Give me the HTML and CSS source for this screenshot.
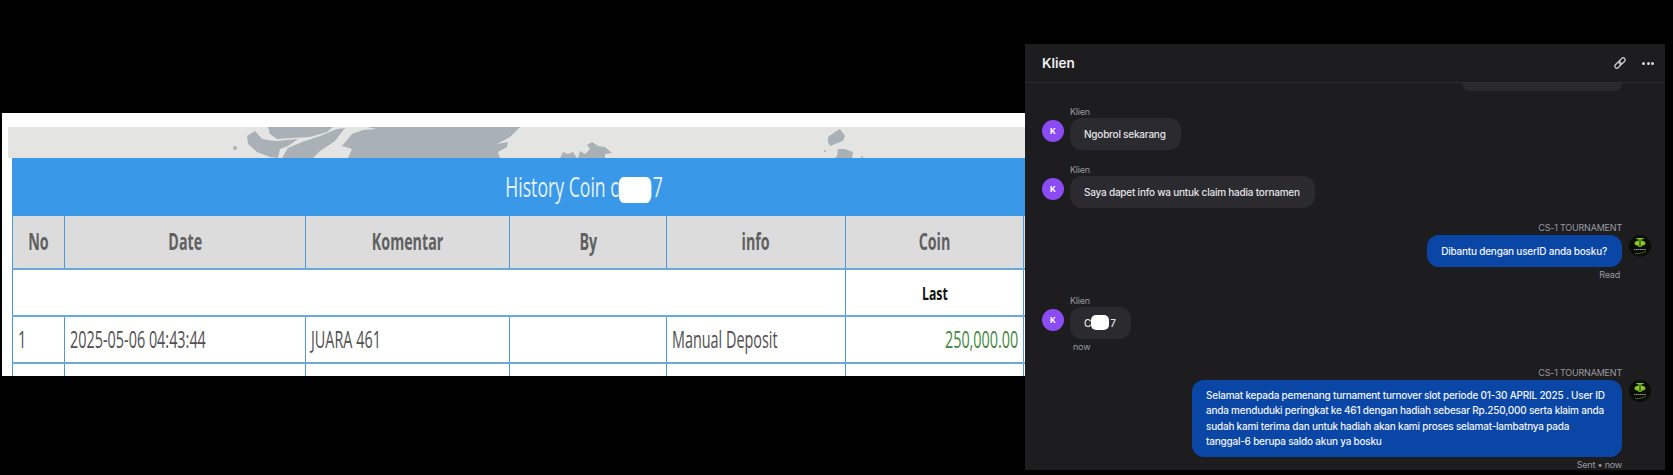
FILE: index.html
```html
<!DOCTYPE html>
<html lang="id">
<head>
<meta charset="utf-8">
<title>History Coin</title>
<link rel="stylesheet" href="styles.css">
</head>
<body>
<main class="stage">
  <section class="sheet">
    <div class="map">
      <svg class="map-art" viewBox="0 0 1017 31" preserveAspectRatio="none" aria-hidden="true">
        <circle cx="227" cy="21" r="2"/>
        <path d="M260 0H325L319 5 302 10 284 11 269 12 262 7z"/>
        <path d="M239 9L247 4 254 12 267 14 290 12 280 19 272 22 270 31 262 30 249 25 240 17z"/>
        <path d="M280 21L294 15 312 9 329 2 337 1 327 14 312 24 305 31H274z"/>
        <path d="M334 19L344 7 355 3 369 2 359 0H512L502 10 489 17 500 15 499 20 490 25 492 31H340L344 22z"/>
        <path d="M552 31L555 25 560 27 565 25 569 31z"/>
        <path d="M570 31L572 24 577 27 582 22 579 18 584 15 590 19 597 20 604 26 597 27 597 31z"/>
        <path d="M820 10L827 5 832 2 837 9 835 14 827 17 822 19 820 15z"/>
        <path d="M829 29L830 22 837 22 845 25 844 31H827z"/>
        <circle cx="817" cy="24" r="1"/>
        <circle cx="854" cy="30" r="1"/>
      </svg>
    </div>
    <table class="ledger">
      <colgroup>
        <col class="c-no"><col class="c-date"><col class="c-kom"><col class="c-by"><col class="c-info"><col class="c-coin"><col class="c-rest">
      </colgroup>
      <thead>
        <tr class="title-row"><th colspan="7"><span class="squeeze">History Coin c<span class="mask"></span>7</span></th></tr>
        <tr class="head-row">
          <th><span class="squeeze">No</span></th><th><span class="squeeze">Date</span></th><th><span class="squeeze">Komentar</span></th><th><span class="squeeze">By</span></th><th><span class="squeeze">info</span></th><th><span class="squeeze">Coin</span></th><th></th>
        </tr>
      </thead>
      <tbody>
        <tr class="last-row"><td colspan="5"></td><td class="last"><span class="squeeze">Last</span></td><td></td></tr>
        <tr class="data-row">
          <td><span class="squeeze">1</span></td><td><span class="squeeze">2025-05-06 04:43:44</span></td><td><span class="squeeze">JUARA 461</span></td><td></td><td><span class="squeeze">Manual Deposit</span></td><td class="amount"><span class="squeeze">250,000.00</span></td><td></td>
        </tr>
        <tr class="data-row"><td></td><td></td><td></td><td></td><td></td><td></td><td></td></tr>
      </tbody>
    </table>
  </section>

  <section class="chat">
    <header class="chat-head">
      <h1>Klien</h1>
      <div class="chat-tools">
        <svg class="ico" viewBox="0 0 16 16" aria-hidden="true"><rect x="8" y="1.500" width="4.600" height="8.400" rx="2.300" transform="rotate(45 10.300 5.700)"/><rect x="3.400" y="6.100" width="4.600" height="8.400" rx="2.300" transform="rotate(45 5.700 10.300)"/></svg>
        <span class="dots"><i></i><i></i><i></i></span>
      </div>
    </header>
    <div class="thread">
      <div class="stub"></div>

      <article class="msg in">
        <span class="who">Klien</span>
        <div class="line"><span class="ava">K</span><p class="bub">Ngobrol sekarang</p></div>
      </article>
      <article class="msg in">
        <span class="who">Klien</span>
        <div class="line"><span class="ava">K</span><p class="bub">Saya dapet info wa untuk claim hadia tornamen</p></div>
      </article>
      <article class="msg out">
        <span class="who">CS-1 TOURNAMENT</span>
        <div class="line"><p class="bub">Dibantu dengan userID anda bosku?</p><svg class="brand" viewBox="0 0 22 22" aria-hidden="true"><circle cx="11" cy="11" r="11" fill="#0b0d08"/><path class="v" d="M7.500 3h7v1.300h-2v1.400c2.300.2 4 1.100 4 2.500s-1.700 2.400-4 2.600v1.200h-3v-1.200c-2.300-.2-4-1.200-4-2.600s1.700-2.300 4-2.500V4.300h-2z"/><path class="k" d="M11 4.500v7"/><path class="t" d="M5 14.500h12"/><path class="s" d="M6 18.500c4 .5 8-.5 11-2.500"/></svg></div>
        <span class="meta">Read</span>
      </article>
      <article class="msg in">
        <span class="who">Klien</span>
        <div class="line"><span class="ava">K</span><p class="bub">C<span class="mask small"></span>7</p></div>
        <span class="meta now">now</span>
      </article>
      <article class="msg out">
        <span class="who">CS-1 TOURNAMENT</span>
        <div class="line"><p class="bub wide">Selamat kepada pemenang turnament turnover slot periode 01-30 APRIL 2025 . User ID anda menduduki peringkat ke 461 dengan hadiah sebesar Rp.250,000 serta klaim anda sudah kami terima dan untuk hadiah akan kami proses selamat-lambatnya pada tanggal-6 berupa saldo akun ya bosku</p><svg class="brand" viewBox="0 0 22 22" aria-hidden="true"><circle cx="11" cy="11" r="11" fill="#0b0d08"/><path class="v" d="M7.500 3h7v1.300h-2v1.400c2.300.2 4 1.100 4 2.500s-1.700 2.400-4 2.600v1.200h-3v-1.200c-2.300-.2-4-1.200-4-2.600s1.700-2.300 4-2.500V4.300h-2z"/><path class="k" d="M11 4.500v7"/><path class="t" d="M5 14.500h12"/><path class="s" d="M6 18.500c4 .5 8-.5 11-2.500"/></svg></div>
        <span class="meta sent">Sent • now</span>
      </article>
    </div>
  </section>
</main>
</body>
</html>
```

FILE: styles.css
```css
* { box-sizing: border-box; }
html, body { margin: 0; height: 100%; background: #000; }
body { overflow: hidden; }

.stage { display: flex; align-items: flex-start; width: 1673px; height: 475px; padding-left: 2px; }

/* left: pasted table screenshot */
.sheet {
  width: 1023px; height: 263px; margin-top: 113px; flex: none;
  background: #fff; overflow: hidden; padding: 14px 0 0 6px;
  font-family: "Open Sans", "Liberation Sans", sans-serif;
}
.map { height: 31px; background: #e4e5e2; }
.map-art { display: block; width: 100%; height: 31px; fill: #a9b0b6; }

.ledger {
  width: 1142px; margin-left: 4px; table-layout: fixed;
  border-collapse: collapse; color: #555;
}
.c-no { width: 52px; } .c-date { width: 241px; } .c-kom { width: 204px; }
.c-by { width: 157px; } .c-info { width: 179px; } .c-coin { width: 178px; } .c-rest { width: 131px; }
.ledger th, .ledger td {
  border-style: solid; border-color: #6aa8e0 #4f98da; border-width: 2px 1px;
  padding: 0 5px; overflow: visible; white-space: nowrap;
}

.squeeze { display: inline-block; transform: scaleX(.6); transform-origin: left center; }
th .squeeze, .last .squeeze { transform-origin: center; }
.amount .squeeze { transform-origin: right center; }

.title-row th {
  height: 56px; padding-bottom: 2px; background: #3a98e8; border-color: #3a98e8; color: #e6f3fd;
  font-size: 28px; font-weight: 400; text-align: center;
}
.title-row .squeeze { transform: scaleX(.63); }
.mask { display: inline-block; width: 52px; height: 26px; margin: 0 2px -6px 0; background: #fff; border-radius: 8px; }
.head-row th { height: 54px; padding-bottom: 3px; background: #dcdcdc; color: #606060; font-size: 23px; font-weight: 700; text-align: center; }
.head-row .squeeze { transform: scaleX(.62); }
.last-row td { height: 47px; }
.last { text-align: center; font-size: 18px; font-weight: 700; color: #111; }
.last .squeeze { transform: scaleX(.68); }
.data-row td { height: 47px; padding-bottom: 3px; font-size: 24px; color: #505050; }
.amount { text-align: right; color: #3f8a3a !important; }

/* right: chat */
.chat {
  width: 640px; height: 426px; margin-top: 44px; flex: none; overflow: hidden;
  background: #1d1d20; color: #e8e8ea;
  font-family: Inter, "Liberation Sans", sans-serif; font-size: 10px;
}
.chat-head {
  height: 39px; display: flex; align-items: center; justify-content: space-between;
  padding: 0 11px 0 17px; border-bottom: 1px solid #2b2b30;
}
.chat-head h1 { margin: 0; font-size: 13.500px; font-weight: 600; color: #f0f0f2; }
.chat-tools { display: flex; align-items: center; gap: 15px; }
.ico { width: 14px; height: 14px; fill: none; stroke: #d8d8dc; stroke-width: 1.400; }
.dots { display: flex; gap: 1.500px; }
.dots i { width: 3px; height: 3px; border-radius: 50%; background: #d8d8dc; }

.thread { padding: 0 0 0 17px; display: flex; flex-direction: column; }
.stub { align-self: flex-end; width: 160px; height: 8px; margin-right: 43px; background: #29292e; border-radius: 0 0 14px 14px; }

.msg { display: flex; flex-direction: column; margin-top: 14px; }
.stub + .msg { margin-top: 15px; }
.who, .meta { font-size: 9px; line-height: 12px; color: #9a9aa0; letter-spacing: -.2px; }
.line { display: flex; align-items: flex-start; gap: 6px; }
.bub { margin: 0; padding: 8px 15px 8px 14px; line-height: 16px; border-radius: 12px; font-size: 10px; font-weight: 500; letter-spacing: -.22px; }

.in { align-items: flex-start; }
.in .who { margin-left: 28px; }
.in .bub { background: #2a2a2f; color: #e4e4e6; }
.ava {
  flex: none; width: 22px; height: 22px; margin-top: 2px; border-radius: 50%;
  background: #8b4cf6; color: #fff; font-size: 8px; font-weight: 700;
  display: flex; align-items: center; justify-content: center;
}
.now { margin: 2px 0 0 31px; }

.out { align-items: flex-end; margin-right: 14px; }
.out .who { margin-right: 29px; margin-bottom: 1px; }
.out .bub { background: #0a46a6; color: #f0f4fb; }
.out .line { gap: 7px; }
.out .meta { margin: 2px 31px 0 0; }
.out .meta.sent { margin-right: 29px; }
.wide { width: 430px; line-height: 15.300px !important; }
.brand { flex: none; width: 22px; height: 22px; }
.brand .v { fill: #86c926; }
.brand .k { fill: none; stroke: #10200a; stroke-width: .9; }
.brand .t { fill: none; stroke: #9a9a9a; stroke-width: 1.200; stroke-dasharray: 1.500 .5; }
.brand .s { fill: none; stroke: #5e7f22; stroke-width: .7; }

.mask.small { width: 18px; height: 15px; margin: 0 1px -3px 0; border-radius: 5px; }
```
